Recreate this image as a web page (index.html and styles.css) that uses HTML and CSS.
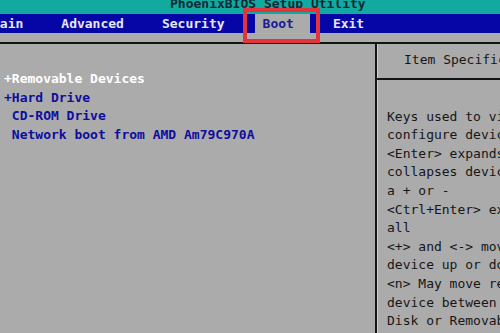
FILE: index.html
```html
<!DOCTYPE html>
<html>
<head>
<meta charset="utf-8">
<link rel="stylesheet" href="styles.css">
</head>
<body>
<div class="screen">
  <div class="titlebar"><span class="title">PhoenixBIOS Setup Utility</span></div>
  <nav class="menubar">
    <span class="tab first">Main</span>
    <span class="tab">Advanced</span>
    <span class="tab">Security</span>
    <span class="tab active">Boot</span>
    <span class="tab">Exit</span>
  </nav>
  <div class="spacer"></div>
  <div class="main">
    <div class="left">
      <div class="row sel">+Removable Devices</div>
      <div class="row">+Hard Drive</div>
      <div class="row"> CD-ROM Drive</div>
      <div class="row"> Network boot from AMD Am79C970A</div>
    </div>
    <div class="right">
      <div class="help-head">Item Specific Help</div>
      <div class="help-body">
        <div class="row">Keys used to view or</div>
        <div class="row">configure devices:</div>
        <div class="row">&lt;Enter&gt; expands or</div>
        <div class="row">collapses devices with</div>
        <div class="row">a + or -</div>
        <div class="row">&lt;Ctrl+Enter&gt; expands</div>
        <div class="row">all</div>
        <div class="row">&lt;+&gt; and &lt;-&gt; moves the</div>
        <div class="row">device up or down.</div>
        <div class="row">&lt;n&gt; May move removable</div>
        <div class="row">device between Hard</div>
        <div class="row">Disk or Removable Disk</div>
      </div>
    </div>
  </div>
  <div class="mark"></div>
</div>
</body>
</html>
```
FILE: styles.css
```css
html, body {
  margin: 0;
  padding: 0;
  background: #ababab;
}
.screen {
  position: relative;
  width: 500px;
  height: 333px;
  overflow: hidden;
  background: #ababab;
  font-family: "DejaVu Sans Mono", "Liberation Mono", monospace;
  font-size: 13px;
}
.titlebar {
  height: 14px;
  background: #12a9a1;
  overflow: hidden;
}
.title {
  display: block;
  padding-left: 170px;
  line-height: 14px;
  margin-top: -3px;
  color: #0c2a34;
  font-weight: bold;
  white-space: pre;
}
.menubar {
  display: flex;
  height: 19px;
  background: #0606a6;
  border-bottom: 1px solid #a8a8e0;
  line-height: 19px;
  color: #e6e6f6;
  font-weight: bold;
}
.tab {
  padding: 0 8px;
  margin-right: 22px;
  white-space: pre;
}
.tab.first {
  margin-left: -16px;
}
.tab.active {
  background: #ababab;
  color: #1a1a9a;
  padding-right: 16px;
  margin-right: 15px;
}
.spacer {
  height: 8px;
}
.main {
  display: flex;
  border-top: 2px solid #141414;
  height: 300px;
}
.left {
  width: 371px;
  padding: 26px 0 0 4px;
  font-weight: bold;
  color: #0e0e9e;
}
.row {
  line-height: 18.6px;
  height: 18.6px;
  white-space: pre;
}
.left .sel {
  color: #ffffff;
}
.right {
  flex: 1;
  border-left: 2px solid #141414;
  box-shadow: inset 1px 0 0 #cfcfcf;
  color: #161616;
  overflow: hidden;
}
.help-head {
  padding: 7px 0 8px 27px;
  line-height: 18.6px;
  border-bottom: 2px solid #141414;
  white-space: pre;
}
.help-body {
  padding: 28px 0 0 10px;
}
.mark {
  position: absolute;
  left: 243px;
  top: 8px;
  width: 69px;
  height: 27px;
  border: 4px solid #e3343c;
}
```
